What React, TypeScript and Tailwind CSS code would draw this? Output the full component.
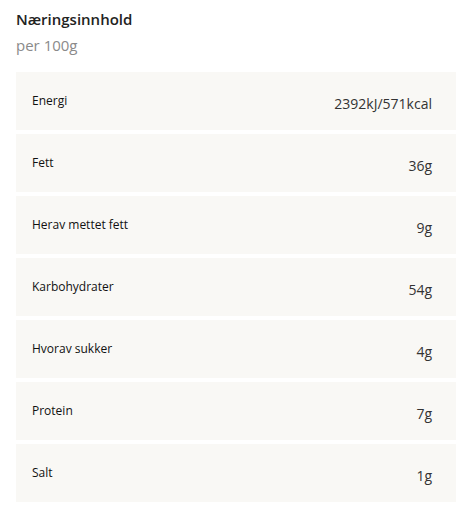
import React from "react";

const rows: [string, string][] = [
  ["Energi", "2392kJ/571kcal"],
  ["Fett", "36g"],
  ["Herav mettet fett", "9g"],
  ["Karbohydrater", "54g"],
  ["Hvorav sukker", "4g"],
  ["Protein", "7g"],
  ["Salt", "1g"],
];

export default function App() {
  return (
    <div
      className="w-[475px] h-[507px] bg-white px-4 pt-[8px]"
      style={{ fontFamily: '"Open Sans", "Noto Sans", sans-serif' }}
    >
      <h2 className="text-[15px] leading-[22px] font-semibold text-[#222]">Næringsinnhold</h2>
      <p className="mt-[4px] text-[15px] leading-[22px] text-[#8a8a8a]">per 100g</p>
      <div className="mt-[16px] flex flex-col gap-[4px] w-[440px]">
        {rows.map(([label, value]) => (
          <div
            key={label}
            className="h-[58px] bg-[#f9f8f5] flex items-center justify-between pl-4 pr-6"
          >
            <span className="text-[12px] font-medium text-[#111]">{label}</span>
            <span className="text-[14px] text-[#333] mt-[4px]">{value}</span>
          </div>
        ))}
      </div>
    </div>
  );
}
